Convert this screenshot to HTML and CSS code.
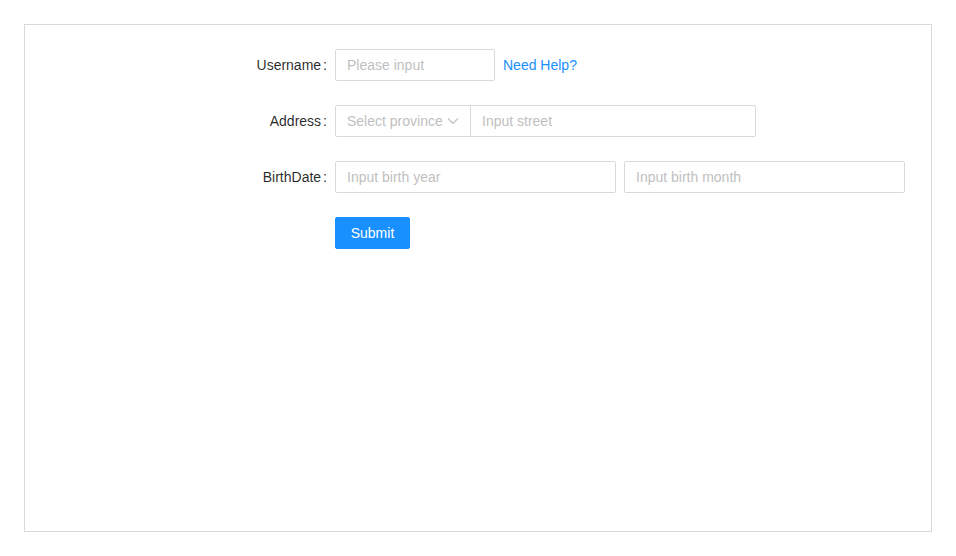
FILE: index.html
```html
<!DOCTYPE html>
<html>
<head>
<meta charset="utf-8">
<link rel="stylesheet" href="styles.css">
</head>
<body>
<div class="frame">
  <form class="form">
    <div class="row">
      <div class="label"><label>Username</label></div>
      <div class="control">
        <input class="input w160" placeholder="Please input">
        <a class="link" href="#">Need Help?</a>
      </div>
    </div>
    <div class="row">
      <div class="label"><label>Address</label></div>
      <div class="control">
        <div class="compact">
          <div class="select">
            <span class="ph">Select province</span>
            <svg class="arrow" viewBox="0 0 12 12" width="12" height="12"><path d="M1 3.5 L6 8.5 L11 3.5" fill="none" stroke="#bfbfbf" stroke-width="1.1"/></svg>
          </div>
          <input class="input street" placeholder="Input street">
        </div>
      </div>
    </div>
    <div class="row">
      <div class="label"><label>BirthDate</label></div>
      <div class="control">
        <input class="input half" placeholder="Input birth year">
        <input class="input half" placeholder="Input birth month">
      </div>
    </div>
    <div class="row">
      <div class="label"></div>
      <div class="control">
        <button type="button" class="btn">Submit</button>
      </div>
    </div>
  </form>
</div>
</body>
</html>
```
FILE: styles.css
```css
* { box-sizing: border-box; }
body {
  margin: 0;
  padding: 24px;
  background: #fff;
  font-family: "Liberation Sans", Arial, sans-serif;
  font-size: 14px;
  color: rgba(0,0,0,0.85);
}
.frame {
  width: 908px;
  height: 508px;
  border: 1px solid #d9d9d9;
  padding-top: 24px;
}
.form { display: flex; flex-direction: column; gap: 24px; }
.row { display: flex; align-items: center; height: 32px; }
.label {
  width: 310px;
  text-align: right;
  flex: none;
  white-space: nowrap;
}
.label label::after {
  content: ":";
  margin: 0 8px 0 2px;
  position: relative;
  top: -0.5px;
}
.control { display: flex; align-items: center; gap: 8px; }
.input {
  height: 32px;
  border: 1px solid #d9d9d9;
  border-radius: 2px;
  padding: 4px 11px;
  font-family: inherit;
  font-size: 14px;
  color: rgba(0,0,0,0.85);
  outline: none;
  background: #fff;
}
.input::placeholder { color: #bfbfbf; }
.w160 { width: 160px; }
.half { width: 281px; }
.link { color: #1890ff; text-decoration: none; white-space: nowrap; }
.compact { display: flex; }
.select {
  width: 136px;
  height: 32px;
  border: 1px solid #d9d9d9;
  border-radius: 2px 0 0 2px;
  padding: 0 11px;
  display: flex;
  align-items: center;
  justify-content: space-between;
  white-space: nowrap;
}
.ph { color: #bfbfbf; }
.street {
  width: 286px;
  margin-left: -1px;
  border-radius: 0 2px 2px 0;
}
.btn {
  height: 32px;
  width: 75px;
  padding: 4px 0;
  background: #1890ff;
  border: 1px solid #1890ff;
  border-radius: 2px;
  color: #fff;
  font-family: inherit;
  font-size: 14px;
}
```
